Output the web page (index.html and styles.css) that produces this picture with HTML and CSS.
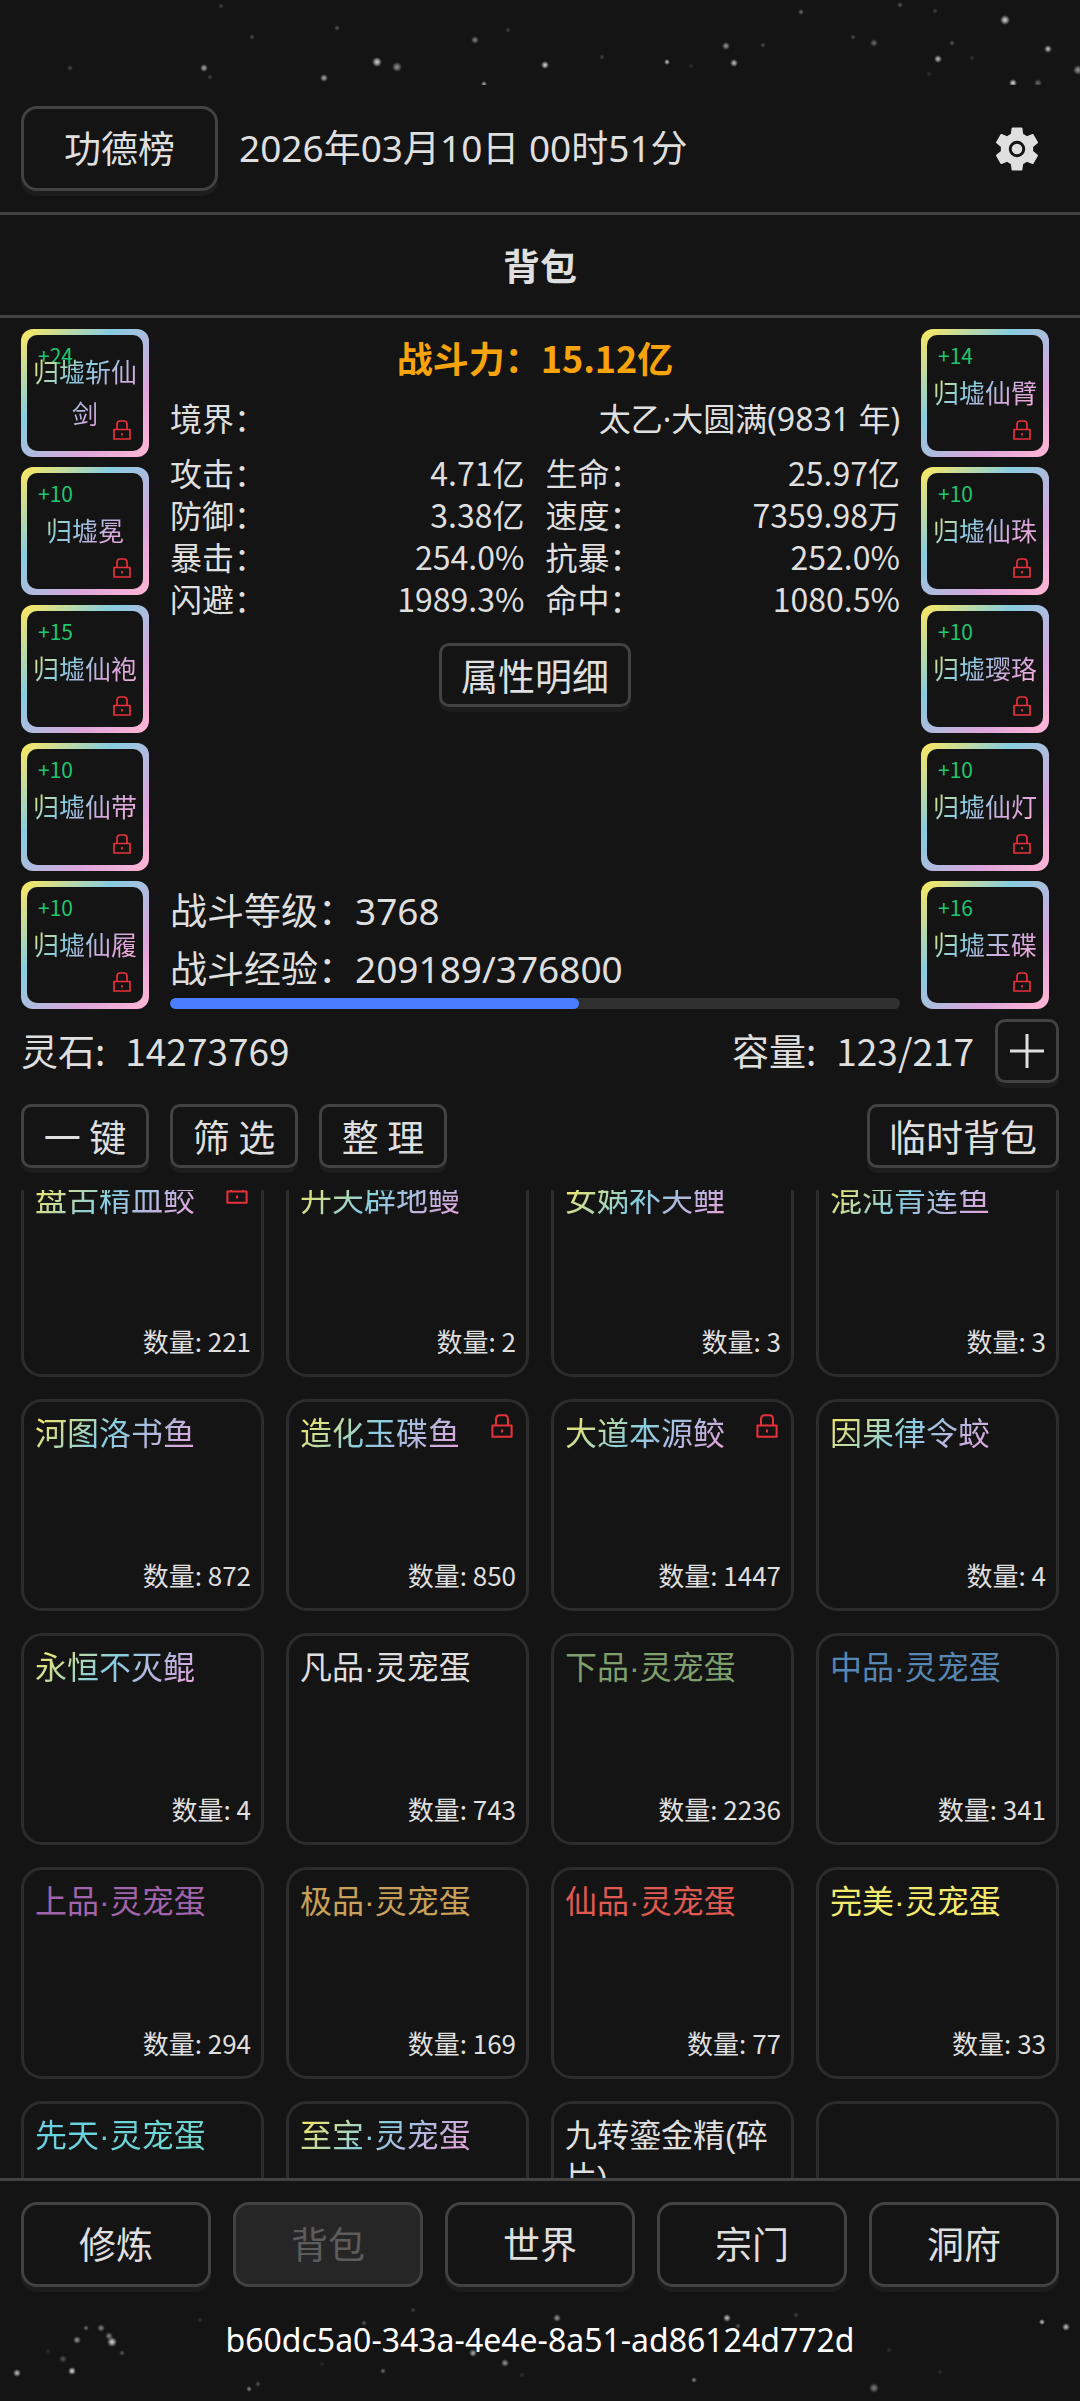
FILE: index.html
```html
<!DOCTYPE html>
<html lang="zh-CN">
<head>
<meta charset="utf-8">
<meta name="viewport" content="width=device-width">
<title>背包</title>
<link rel="stylesheet" href="styles.css">
</head>
<body>
<svg class="defs" aria-hidden="true">
  <symbol id="lock" viewBox="0 0 18 20">
    <path d="M1 9.5h16v9.5H1zM4 9.5V4.5Q4 1 7 1h4q3 0 3 3.500v5M9 13v2.500" fill="none" stroke="currentColor" stroke-width="1.700" stroke-linejoin="round"/>
  </symbol>
  <radialGradient id="star"><stop offset="0.200" stop-color="#fff"/><stop offset="1" stop-color="#fff" stop-opacity="0"/></radialGradient>
</svg>

<div class="sky sky-top"><svg class="stars" data-sky="top" viewBox="0 0 1080 85" preserveAspectRatio="xMidYMid slice" aria-hidden="true"></svg></div>

<header class="topbar">
  <button class="btn btn-large">功德榜</button>
  <time class="clock" datetime="2026-03-10T00:51">2026年03月10日 00时51分</time>
  <button class="gear" aria-label="设置">
    <svg viewBox="0 0 24 24"><path fill="currentColor" d="M19.140 12.940c.04-.3.06-.61.06-.94 0-.32-.02-.64-.07-.94l2.030-1.580c.18-.14.23-.41.12-.61l-1.920-3.320c-.12-.22-.37-.29-.59-.22l-2.390.96c-.5-.38-1.030-.7-1.620-.94l-.36-2.540c-.04-.24-.24-.41-.48-.41h-3.840c-.24 0-.43.17-.47.41l-.36 2.540c-.59.24-1.130.57-1.620.94l-2.390-.96c-.22-.08-.47 0-.59.22L2.740 8.870c-.12.21-.08.47.12.61l2.030 1.580c-.05.3-.09.63-.09.94s.02.64.07.94l-2.030 1.580c-.18.14-.23.41-.12.61l1.920 3.320c.12.22.37.29.59.22l2.390-.96c.5.38 1.030.7 1.620.94l.36 2.540c.05.24.24.41.48.41h3.840c.24 0 .44-.17.47-.41l.36-2.540c.59-.24 1.130-.56 1.620-.94l2.390.96c.22.08.47 0 .59-.22l1.920-3.320c.12-.22.07-.47-.12-.61l-2.010-1.580z"/><circle cx="12" cy="12" r="3" fill="none" stroke="#141414" stroke-width="1.300"/></svg>
  </button>
</header>

<h1 class="title">背包</h1>

<main class="content">
  <section class="hero">
    <div class="slots">
      <button class="slot"><span class="level">+24</span><span class="slot-name">归墟斩仙剑</span><svg class="lock"><use href="#lock"/></svg></button>
      <button class="slot"><span class="level">+10</span><span class="slot-name">归墟冕</span><svg class="lock"><use href="#lock"/></svg></button>
      <button class="slot"><span class="level">+15</span><span class="slot-name">归墟仙袍</span><svg class="lock"><use href="#lock"/></svg></button>
      <button class="slot"><span class="level">+10</span><span class="slot-name">归墟仙带</span><svg class="lock"><use href="#lock"/></svg></button>
      <button class="slot"><span class="level">+10</span><span class="slot-name">归墟仙履</span><svg class="lock"><use href="#lock"/></svg></button>
    </div>

    <div class="panel">
      <h2 class="power">战斗力：15.12亿</h2>
      <dl class="realm"><dt>境界：</dt><dd>太乙·大圆满(9831 年)</dd></dl>
      <dl class="stats">
        <div><dt>攻击：</dt><dd>4.71亿</dd></div>
        <div><dt>生命：</dt><dd>25.97亿</dd></div>
        <div><dt>防御：</dt><dd>3.38亿</dd></div>
        <div><dt>速度：</dt><dd>7359.98万</dd></div>
        <div><dt>暴击：</dt><dd>254.0%</dd></div>
        <div><dt>抗暴：</dt><dd>252.0%</dd></div>
        <div><dt>闪避：</dt><dd>1989.3%</dd></div>
        <div><dt>命中：</dt><dd>1080.5%</dd></div>
      </dl>
      <button class="btn detail">属性明细</button>
      <div class="progress">
        <p>战斗等级：3768</p>
        <p>战斗经验：209189/376800</p>
        <div class="bar"><div class="bar-fill" style="width:56%"></div></div>
      </div>
    </div>

    <div class="slots">
      <button class="slot"><span class="level">+14</span><span class="slot-name">归墟仙臂</span><svg class="lock"><use href="#lock"/></svg></button>
      <button class="slot"><span class="level">+10</span><span class="slot-name">归墟仙珠</span><svg class="lock"><use href="#lock"/></svg></button>
      <button class="slot"><span class="level">+10</span><span class="slot-name">归墟璎珞</span><svg class="lock"><use href="#lock"/></svg></button>
      <button class="slot"><span class="level">+10</span><span class="slot-name">归墟仙灯</span><svg class="lock"><use href="#lock"/></svg></button>
      <button class="slot"><span class="level">+16</span><span class="slot-name">归墟玉碟</span><svg class="lock"><use href="#lock"/></svg></button>
    </div>
  </section>

  <div class="row wealth">
    <p class="pair"><span>灵石:</span><span>14273769</span></p>
    <p class="pair push"><span>容量:</span><span>123/217</span></p>
    <button class="btn plus" aria-label="扩容"><svg viewBox="0 0 34 34"><path d="M17 0v34M0 17h34" stroke="currentColor" stroke-width="3"/></svg></button>
  </div>

  <div class="row tools">
    <button class="btn">一 键</button>
    <button class="btn">筛 选</button>
    <button class="btn">整 理</button>
    <button class="btn push">临时背包</button>
  </div>

  <div class="bag">
    <ul class="grid">
      <li class="card"><span class="name rainbow">盘古精血鲛</span><svg class="lock"><use href="#lock"/></svg><span class="count">数量: 221</span></li>
      <li class="card"><span class="name rainbow">开天辟地鳗</span><span class="count">数量: 2</span></li>
      <li class="card"><span class="name rainbow">女娲补天鲤</span><span class="count">数量: 3</span></li>
      <li class="card"><span class="name rainbow">混沌青莲鱼</span><span class="count">数量: 3</span></li>
      <li class="card"><span class="name rainbow">河图洛书鱼</span><span class="count">数量: 872</span></li>
      <li class="card"><span class="name rainbow">造化玉碟鱼</span><svg class="lock"><use href="#lock"/></svg><span class="count">数量: 850</span></li>
      <li class="card"><span class="name rainbow">大道本源鲛</span><svg class="lock"><use href="#lock"/></svg><span class="count">数量: 1447</span></li>
      <li class="card"><span class="name rainbow">因果律令蛟</span><span class="count">数量: 4</span></li>
      <li class="card"><span class="name rainbow">永恒不灭鲲</span><span class="count">数量: 4</span></li>
      <li class="card"><span class="name">凡品·灵宠蛋</span><span class="count">数量: 743</span></li>
      <li class="card"><span class="name low">下品·灵宠蛋</span><span class="count">数量: 2236</span></li>
      <li class="card"><span class="name mid">中品·灵宠蛋</span><span class="count">数量: 341</span></li>
      <li class="card"><span class="name high">上品·灵宠蛋</span><span class="count">数量: 294</span></li>
      <li class="card"><span class="name top">极品·灵宠蛋</span><span class="count">数量: 169</span></li>
      <li class="card"><span class="name immortal">仙品·灵宠蛋</span><span class="count">数量: 77</span></li>
      <li class="card"><span class="name perfect">完美·灵宠蛋</span><span class="count">数量: 33</span></li>
      <li class="card"><span class="name innate">先天·灵宠蛋</span></li>
      <li class="card"><span class="name rainbow">至宝·灵宠蛋</span></li>
      <li class="card"><span class="name">九转鎏金精(碎片)</span></li>
      <li class="card"></li>
    </ul>
  </div>
</main>

<nav class="tabs">
  <button class="btn btn-large">修炼</button>
  <button class="btn btn-large" disabled>背包</button>
  <button class="btn btn-large">世界</button>
  <button class="btn btn-large">宗门</button>
  <button class="btn btn-large">洞府</button>
</nav>

<footer class="sky sky-bottom">
  <svg class="stars" data-sky="bottom" viewBox="0 0 1080 93" preserveAspectRatio="xMidYMid slice" aria-hidden="true"></svg>
  <p class="uid">b60dc5a0-343a-4e4e-8a51-ad86124d772d</p>
</footer>
<script src="script.js"></script>
</body>
</html>
```
FILE: styles.css
```css
* { box-sizing: border-box; margin: 0; padding: 0; }

:root {
  --bg: #141414;
  --text: #dfdfdf;
  --line: #424242;
  --rainbow: linear-gradient(135deg, #ffe95c, #87cde0 36%, #dda6dd 72%, #ffb6d4);
  --wide: "Noto Sans", "Noto Sans CJK SC", sans-serif;
}

body {
  display: flex;
  flex-direction: column;
  height: 100vh;
  background: var(--bg);
  color: var(--text);
  font: 37px/58px "Noto Sans CJK SC", sans-serif;
}

button {
  font: inherit;
  color: inherit;
  background: none;
  border: 0;
}

ul { list-style: none; }

.defs { position: absolute; width: 0; height: 0; }

.btn {
  min-width: 128px;
  height: 64px;
  padding: 0 19px 3px;
  border: 3px solid var(--line);
  border-radius: 10px;
  box-shadow: 0 5px 0 #1d1d1d;
  white-space: nowrap;
}

.btn-large { height: 85px; border-radius: 16px; }

.btn:disabled {
  background: #262626;
  color: #5c5c5c;
  box-shadow: none;
}

.push { margin-left: auto; }

/* Night-sky bands above and below the app */
.sky { flex: none; position: relative; }
.sky-top { height: 85px; }
.sky-bottom { height: 93px; text-align: center; }
.stars { position: absolute; inset: 0; width: 100%; height: 100%; opacity: .8; }

.uid {
  position: relative;
  padding-top: 3px;
  color: #fff;
  font-family: var(--wide);
  font-size: 32px;
}

.topbar {
  flex: none;
  display: flex;
  align-items: center;
  gap: 21px;
  padding: 21px 36px 21px 21px;
  border-bottom: 3px solid var(--line);
}

.topbar .btn { width: 197px; }

.clock { padding-bottom: 2px; font-family: var(--wide); }

.gear { margin-left: auto; width: 54px; height: 54px; }
.gear svg { display: block; }

.title {
  flex: none;
  padding: 21px;
  border-bottom: 3px solid var(--line);
  font-size: 37px;
  font-weight: 700;
  text-align: center;
}

.content {
  flex: 1;
  min-height: 0;
  display: flex;
  flex-direction: column;
  padding-top: 11px;
}

.hero {
  display: grid;
  grid-template-columns: 128px 1fr 128px;
  gap: 21px;
  padding: 0 31px 0 21px;
}

.slots { display: flex; flex-direction: column; gap: 10px; }

.slot {
  position: relative;
  height: 128px;
  border: 6px solid transparent;
  border-radius: 12px;
  background: var(--rainbow) border-box;
  font-size: 26px;
  line-height: 42px;
}

/* Dark inner face, leaving the gradient visible as a frame */
.slot::before {
  content: "";
  position: absolute;
  inset: 0;
  border-radius: 10px;
  background: var(--bg);
}

.slot-name {
  position: relative;
  display: block;
  padding-bottom: 2px;
  background: var(--rainbow);
  -webkit-background-clip: text;
  background-clip: text;
  color: transparent;
}

.level {
  position: absolute;
  left: 11px;
  top: 9px;
  color: #1fc76f;
  font-size: 21px;
  line-height: 22px;
}

.lock { position: absolute; color: #e8303a; }
.slot .lock { right: 12px; bottom: 11px; width: 18px; height: 20px; }

.panel { display: flex; flex-direction: column; }

.power {
  color: #f7a30c;
  font-size: 36px;
  line-height: 56px;
  font-weight: 700;
  text-align: center;
}

.realm, .stats { font-size: 32px; line-height: 42px; }
.realm, .stats div { display: flex; justify-content: space-between; }
.realm { margin: 13px 0 11px; font-family: var(--wide); }

.stats {
  display: grid;
  grid-template-columns: 1fr 1fr;
  column-gap: 21px;
}

.detail { align-self: center; margin-top: 24px; }

.progress { margin-top: auto; font-family: var(--wide); }

.bar {
  height: 11px;
  border-radius: 6px;
  background: #303030;
  overflow: hidden;
}

.bar-fill { height: 100%; border-radius: 6px; background: #4a7dff; }

.row { display: flex; align-items: center; gap: 21px; padding: 0 21px; }
.wealth { margin-top: 10px; }
.tools { margin: 21px 0 22px; }
.pair { display: flex; gap: 20px; padding-bottom: 2px; }
.wealth .plus { min-width: 64px; width: 64px; padding: 0 12px; }
.plus svg { display: block; }

.bag {
  flex: 1;
  min-height: 0;
  overflow-y: auto;
  scrollbar-width: none;
}

.grid {
  display: grid;
  grid-template-columns: repeat(4, 1fr);
  grid-auto-rows: 212px;
  gap: 22px;
  padding: 0 21px;
}

.card {
  position: relative;
  display: flex;
  flex-direction: column;
  justify-content: space-between;
  padding: 11px 10px 12px 11px;
  border: 3px solid #2c2c2c;
  border-radius: 21px;
  font-size: 32px;
  line-height: 42px;
}

.card .lock { right: 13px; top: 12px; width: 22px; height: 24px; }

.name { font-family: "Liberation Sans", "Noto Sans CJK SC", sans-serif; }
.count { font-size: 26px; text-align: right; margin-top: auto; }

.rainbow, .innate {
  background: var(--rainbow);
  -webkit-background-clip: text;
  background-clip: text;
  color: transparent;
}

.innate { background-image: linear-gradient(135deg, #68cfe6, #72dcc8); }
.low { color: #7f9f6c; }
.mid { color: #5787b5; }
.high { color: #a164ab; }
.top { color: #c8a05a; }
.immortal { color: #e05a52; }
.perfect { color: #f3ea6c; }

.tabs {
  flex: none;
  display: flex;
  gap: 22px;
  padding: 21px;
  border-top: 3px solid var(--line);
}

.tabs .btn { flex: 1; }
```
FILE: script.js
```js
// Star fields: [x, y, radius, opacity]
const skies = {
  top: [
    [221, 6, 3, .2], [252, 37, 3, .25], [337, 28, 3, .3], [475, 40, 4, .5], [508, 30, 3, .2],
    [377, 62, 5, .9], [397, 67, 5, .6], [204, 68, 4, .7], [210, 77, 3, .2], [70, 68, 3, .25],
    [324, 78, 4, .7], [484, 84, 3, .7], [545, 65, 4, .9], [602, 57, 3, .2], [667, 62, 3, .8],
    [691, 66, 3, .12], [726, 46, 4, .6], [734, 63, 4, .8], [763, 45, 3, .25], [801, 12, 3, .4],
    [853, 37, 3, .25], [874, 43, 4, .4], [900, 5, 3, .3], [935, 11, 3, .2], [1005, 20, 5, .9],
    [952, 43, 3, .3], [938, 59, 4, .8], [972, 58, 3, .15], [1048, 49, 4, .8], [1078, 70, 5, .6],
    [1013, 83, 4, .9], [1038, 83, 4, .4], [929, 74, 3, .12]
  ],
  bottom: [
    [413, 2, 3, .2], [557, 10, 4, .6], [727, 10, 4, .8], [796, 7, 3, .2], [364, 15, 3, .3],
    [1042, 14, 3, .8], [1066, 19, 4, .8], [86, 20, 3, .4], [101, 20, 4, .5], [77, 32, 4, .6],
    [112, 34, 5, .9], [109, 28, 4, .5], [122, 45, 3, .3], [63, 51, 4, .3], [48, 43, 3, .12],
    [17, 65, 4, .8], [72, 63, 4, .9], [473, 45, 4, .7], [505, 55, 4, .6], [383, 63, 3, .4],
    [249, 81, 3, .5], [258, 76, 3, .3], [694, 72, 3, .5], [874, 80, 5, .5], [940, 64, 3, .12],
    [200, 12, 3, .12], [889, 42, 3, .12], [738, 18, 3, .3], [322, 56, 3, .1], [522, 67, 3, .12]
  ]
};

for (const svg of document.querySelectorAll('.stars')) {
  for (const [x, y, r, opacity] of skies[svg.dataset.sky]) {
    const c = document.createElementNS('http://www.w3.org/2000/svg', 'circle');
    c.setAttribute('cx', x);
    c.setAttribute('cy', y);
    c.setAttribute('r', r);
    c.setAttribute('fill', 'url(#star)');
    c.setAttribute('opacity', opacity);
    svg.append(c);
  }
}

document.querySelector('.bag').scrollTop = 25;
```
